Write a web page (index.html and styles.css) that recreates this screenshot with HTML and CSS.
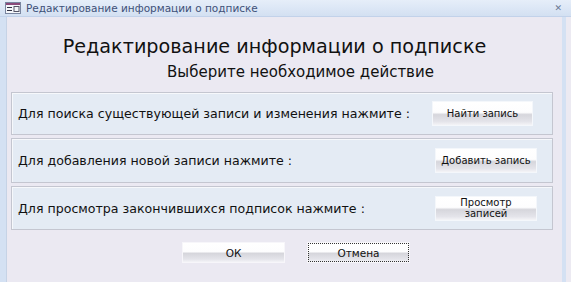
FILE: index.html
```html
<!DOCTYPE html>
<html lang="ru">
<head>
<meta charset="utf-8">
<link rel="stylesheet" href="styles.css">
</head>
<body>
<div class="window">
  <div class="titlebar">
    <svg class="ticon" width="16" height="12" viewBox="0 0 16 12">
      <rect x="0.5" y="0.5" width="15" height="11" fill="#f4f6fa" stroke="#7a86a0"/>
      <rect x="1" y="1" width="14" height="2" fill="#8a4a7a"/>
      <line x1="2" y1="5.5" x2="7" y2="5.5" stroke="#334" />
      <line x1="2" y1="8.5" x2="7" y2="8.5" stroke="#334" />
      <rect x="9" y="4.5" width="5" height="5" fill="none" stroke="#556"/>
    </svg>
    <span class="ttext">Редактирование информации о подписке</span>
    <span class="tclose">✕</span>
  </div>
  <div class="frame">
    <div class="client">
      <div class="h1">Редактирование информации о подписке</div>
      <div class="h2">Выберите необходимое действие</div>
      <div class="panels">
        <div class="panel p1">
          <span class="label">Для поиска существующей записи и изменения нажмите :</span>
          <button class="btn b1">Найти запись</button>
        </div>
        <div class="panel p2">
          <span class="label">Для добавления новой записи нажмите :</span>
          <button class="btn b2">Добавить запись</button>
        </div>
        <div class="panel p3">
          <span class="label">Для просмотра закончившихся подписок нажмите :</span>
          <button class="btn b2 two">Просмотр<br>записей</button>
        </div>
      </div>
      <div class="actions">
        <button class="btn ok">ОК</button>
        <button class="btn ok focus">Отмена</button>
      </div>
    </div>
  </div>
</div>
</body>
</html>
```

FILE: styles.css
```css
html, body {
  margin: 0;
  padding: 0;
  width: 571px;
  height: 282px;
  overflow: hidden;
  font-family: "DejaVu Sans", Verdana, sans-serif;
  background: #eceaf2;
}
.window {
  width: 571px;
  height: 282px;
  display: flex;
  flex-direction: column;
}
.titlebar {
  height: 17px;
  flex: none;
  display: flex;
  align-items: center;
  background: linear-gradient(#e6eef9, #d3e0f2);
  border-bottom: 1px solid #c2d2ea;
  box-sizing: border-box;
  padding-left: 5px;
}
.ticon { flex: none; }
.ttext {
  margin-left: 5px;
  font-size: 10.5px;
  color: #3e5178;
  flex: 1;
}
.tclose {
  font-size: 9px;
  color: #6a7a94;
  margin-right: 9px;
  font-weight: bold;
}
.frame {
  flex: 1;
  display: flex;
  border-left: 6px solid #d4e1f3;
  border-right: 4px solid #d4e1f3;
  margin-right: 5px;
}
.client {
  flex: 1;
  background: #ebe9f2;
  border-left: 1px solid #c6d3e6;
  display: flex;
  flex-direction: column;
  padding: 0 9px 0 4px;
}
.h1 {
  font-size: 19.2px;
  color: #111;
  text-align: center;
  margin-top: 18px;
  line-height: 24px;
  padding-right: 15px;
}
.h2 {
  font-size: 15px;
  color: #111;
  text-align: center;
  margin-top: 5px;
  line-height: 17px;
  padding-left: 37px;
}
.panels {
  margin-top: 11px;
  display: flex;
  flex-direction: column;
  gap: 3px;
}
.panel {
  box-sizing: border-box;
  background: #e4ebf4;
  border: 1px solid #c4c6d0;
  box-shadow: inset 1px 1px 0 #f6f8fb;
  display: flex;
  align-items: center;
  padding-left: 6px;
}
.p1 { height: 43px; }
.p2 { height: 45px; }
.p3 { height: 44px; }
.label {
  font-size: 12.6px;
  color: #111;
  flex: 1;
}
.btn {
  font-family: "DejaVu Sans", Verdana, sans-serif;
  font-size: 10px;
  color: #111;
  border: none;
  padding: 0;
  background: linear-gradient(#ffffff 0%, #fdfdfe 45%, #d6d6dc 55%, #e4e4ea 85%, #f4f4f7 100%);
  box-shadow: 0 0 0 1px rgba(255,255,255,0.6);
  height: 23px;
  width: 100px;
}
.b1 { width: 99px; margin-right: 20px; }
.b2 { margin-right: 16px; }
.two { line-height: 11px; }
.actions {
  display: flex;
  gap: 24px;
  margin-top: 13px;
  padding-left: 172px;
}
.ok {
  height: 19px;
  width: 101px;
  font-size: 10.5px;
}
.focus {
  outline: 1px dotted #333;
  outline-offset: -1px;
}
```
